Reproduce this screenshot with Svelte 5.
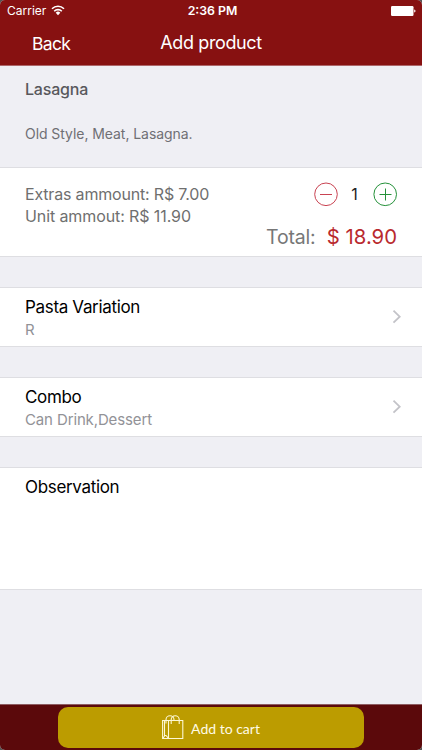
<script lang="ts">
	const product = {
		name: 'Lasagna',
		description: 'Old Style, Meat, Lasagna.',
		extras: 7,
		unit: 11.9
	};

	const options = [
		{ title: 'Pasta Variation', value: 'R' },
		{ title: 'Combo', value: 'Can Drink,Dessert' }
	];

	let quantity = $state(1);
	let total = $derived((product.extras + product.unit) * quantity);

	function decrease() {
		if (quantity > 1) quantity -= 1;
	}

	function increase() {
		quantity += 1;
	}
</script>

<div class="screen">
	<header>
		<div class="status-bar">
			<div class="carrier">
				<span>Carrier</span>
				<svg width="14" height="11" viewBox="0 0 14 11" fill="none" stroke="#fff" stroke-width="1.6">
					<path d="M1 3.8a8.4 8.4 0 0 1 12 0" />
					<path d="M3.2 6.2a5.3 5.3 0 0 1 7.6 0" />
					<path d="M7 10.2 4.7 7.8a3.2 3.2 0 0 1 4.6 0z" fill="#fff" stroke="none" />
				</svg>
			</div>
			<span class="clock">2:36 PM</span>
			<svg class="battery" width="25" height="10" viewBox="0 0 25 10" fill="#fff">
				<rect width="22.5" height="10" rx="1.2" />
				<path d="M23.2 3.4q1.3.3 1.3 1.6t-1.3 1.6z" />
			</svg>
		</div>
		<nav>
			<button type="button" class="back">Back</button>
			<h1>Add product</h1>
		</nav>
	</header>

	<main>
		<section class="intro">
			<h2>{product.name}</h2>
			<p>{product.description}</p>
		</section>

		<section class="card amounts">
			<div class="prices">
				<span class="extras">Extras ammount: R$ {product.extras.toFixed(2)}</span>
				<span class="unit">Unit ammout: R$ {product.unit.toFixed(2)}</span>
			</div>
			<div class="summary">
				<div class="stepper">
					<button type="button" class="minus" aria-label="Decrease" onclick={decrease}>
						<svg width="24" height="24" viewBox="0 0 24 24" fill="none" stroke="currentColor">
							<circle cx="12" cy="12.3" r="11.3" />
							<path d="M6 12.5h12" />
						</svg>
					</button>
					<span class="quantity">{quantity}</span>
					<button type="button" class="plus" aria-label="Increase" onclick={increase}>
						<svg width="24" height="24" viewBox="0 0 24 24" fill="none" stroke="currentColor">
							<circle cx="12.2" cy="12.3" r="11.3" />
							<path d="M6.5 12.5h12M12.5 6.5v12" />
						</svg>
					</button>
				</div>
				<div class="total">
					<span class="total-label">Total:</span>
					<span class="total-value">$ {total.toFixed(2)}</span>
				</div>
			</div>
		</section>

		{#each options as option}
			<button type="button" class="card option">
				<span class="option-text">
					<span class="option-title">{option.title}</span>
					<span class="option-value">{option.value}</span>
				</span>
				<svg width="10" height="14" viewBox="0 0 10 14" fill="none" stroke="#c3c3c8" stroke-width="1.8">
					<path d="m1.5.7 6.2 6-6.2 6" />
				</svg>
			</button>
		{/each}

		<section class="card observation">
			<span class="option-title">Observation</span>
		</section>
	</main>

	<footer>
		<button type="button" class="cart">
			<svg width="22" height="25" viewBox="0 0 22 25" fill="none" stroke="#fdf8d4" stroke-width="1.1">
				<path d="M.6 5.5h20.2v18H.6zM6.5 5.5v18M2.5 5.5v15.2M.8 23.3l2.2-2.8h1l2.5 2.8" />
				<path d="M4 8.5V4.7a4 4 0 0 1 8 0v.8" />
				<path d="M9.2 9V4.7a4 4 0 0 1 8 0V9" />
			</svg>
			<span>Add to cart</span>
		</button>
	</footer>
</div>

<style>
	:global(body) {
		background: #555;
	}

	.screen {
		display: flex;
		flex-direction: column;
		height: 750px;
		overflow: hidden;
		border-radius: 5px;
		background: #efeff4;
		font-family: Inter, 'Liberation Sans', sans-serif;
		color: #000;
	}

	button {
		margin: 0;
		padding: 0;
		border: none;
		background: none;
		font: inherit;
		color: inherit;
		text-align: left;
	}

	h1,
	h2,
	p {
		margin: 0;
	}

	svg {
		display: block;
	}

	header {
		box-sizing: border-box;
		flex: none;
		height: 66px;
		background: #871111;
		border-bottom: 1px solid #ae6669;
		color: #fff;
	}

	.status-bar {
		display: grid;
		grid-template-columns: 1fr auto 1fr;
		align-items: center;
		height: 21px;
		padding: 0 6px 0 7px;
		font-size: 12px;
	}

	.carrier {
		display: flex;
		align-items: center;
		gap: 5px;
	}

	.clock {
		padding-left: 2px;
		font-weight: 600;
		font-size: 12.3px;
	}

	.battery {
		justify-self: end;
	}

	nav {
		display: grid;
		grid-template-columns: 1fr auto 1fr;
		align-items: center;
		height: 44px;
		padding: 0 32px;
	}

	.back {
		font-size: 17.5px;
		letter-spacing: -0.7px;
	}

	h1 {
		padding-bottom: 1px;
		font-size: 18px;
		font-weight: 400;
		letter-spacing: -0.38px;
	}

	.intro {
		box-sizing: border-box;
		height: 101px;
		padding: 13px 25px 0;
	}

	h2 {
		font-size: 16px;
		line-height: 20px;
		font-weight: 500;
		letter-spacing: -0.2px;
		color: #58585c;
	}

	.intro p {
		margin-top: 26px;
		font-size: 14px;
		line-height: 18px;
		letter-spacing: -0.06px;
		color: #707074;
	}

	.card {
		box-sizing: border-box;
		border-top: 1px solid #dedee2;
		border-bottom: 1px solid #dedee2;
		background: #fff;
	}

	.amounts {
		display: flex;
		justify-content: space-between;
		height: 90px;
		padding: 14px 25px 0;
		color: #6f6f6f;
	}

	.prices {
		display: flex;
		flex-direction: column;
		padding-top: 2px;
		font-size: 16px;
		line-height: 21.5px;
	}

	.extras {
		letter-spacing: -0.18px;
	}

	.unit {
		letter-spacing: -0.1px;
	}

	.summary {
		display: flex;
		flex-direction: column;
		align-items: flex-end;
	}

	.stepper {
		display: flex;
		align-items: center;
		height: 24px;
	}

	.quantity {
		box-sizing: border-box;
		width: 35px;
		padding-right: 2px;
		font-size: 16px;
		text-align: center;
		color: #222;
	}

	.minus {
		color: #c94352;
	}

	.plus {
		color: #25913a;
	}

	.plus svg,
	.minus svg {
		overflow: visible;
	}

	.total {
		display: flex;
		align-items: baseline;
		gap: 11.5px;
		margin-top: 18px;
		line-height: 26px;
	}

	.total-label {
		font-size: 19.5px;
		letter-spacing: -0.2px;
		color: #777;
	}

	.total-value {
		font-size: 20.3px;
		color: #b9292e;
	}

	.option {
		display: flex;
		align-items: center;
		justify-content: space-between;
		width: 100%;
		height: 60px;
		margin-top: 30px;
		padding: 0 20px 0 25px;
	}

	.option-text {
		display: flex;
		flex-direction: column;
	}

	.option-title {
		font-size: 17px;
		line-height: 24px;
		letter-spacing: -0.33px;
	}

	.option-value {
		font-size: 15px;
		line-height: 21px;
		letter-spacing: -0.13px;
		color: #929297;
	}

	.observation {
		height: 123px;
		margin-top: 30px;
		padding: 7px 25px;
	}

	footer {
		box-sizing: border-box;
		display: flex;
		justify-content: center;
		flex: none;
		height: 46px;
		margin-top: auto;
		padding-top: 2px;
		border-top: 1px solid #8d5c61;
		background: #5b090b;
	}

	.cart {
		display: flex;
		align-items: center;
		justify-content: center;
		gap: 7px;
		width: 306px;
		height: 41px;
		border-radius: 10px;
		background: #bc9c00;
		font-family: Lato, sans-serif;
		font-size: 14px;
		color: #fffbe6;
	}

	.cart span {
		padding-top: 2px;
	}
</style>
